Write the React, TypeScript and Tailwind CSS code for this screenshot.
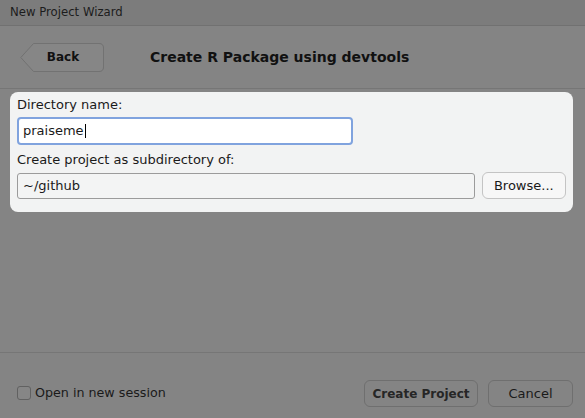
import React from "react";

export default function App() {
  const font = { fontFamily: '"DejaVu Sans", "Liberation Sans", sans-serif' };
  return (
    <div
      className="w-[585px] h-[418px] flex flex-col bg-[#848484] text-[#1a1a1a] overflow-hidden"
      style={font}
    >
      {/* title bar */}
      <div className="h-[26px] shrink-0 bg-[#7c7c7c] border-b border-[#717171] flex items-center pl-[10px] text-[11.7px] text-[#1c1c1c]">
        New Project Wizard
      </div>
      {/* header */}
      <div className="h-[63px] shrink-0 border-b border-[#767676] flex items-center pl-[20px]">
        <div className="relative w-[84px] h-[29px] flex items-center justify-center pl-[10px]">
          <svg className="absolute inset-0" width="84" height="29" viewBox="0 0 84 29">
            <path
              d="M13.5 0.5 H79 Q83.5 0.5 83.5 5 V24 Q83.5 28.5 79 28.5 H13.5 L0.8 14.5 Z"
              fill="#868686"
              stroke="#727272"
              strokeWidth="1"
            />
          </svg>
          <span className="relative text-[12px] font-bold text-[#111] mr-[8px]">Back</span>
        </div>
        <div className="ml-[46px] text-[14px] font-bold text-[#111]">
          Create R Package using devtools
        </div>
      </div>
      {/* panel */}
      <div className="mx-[10px] mt-[3px] w-[563px] rounded-[8px] bg-[#f2f3f3] px-[7px] pt-[5px] pb-[13px] text-[13px] text-[#1a1a1a]">
        <div className="h-[16px] leading-[16px]">Directory name:</div>
        <div className="mt-[4px] w-[336px] h-[28px] rounded-[4px] border-2 border-[#80a3de] bg-white flex items-center pl-[4px]">
          <span>praiseme</span>
          <span className="w-px h-[14px] bg-black ml-px" />
        </div>
        <div className="mt-[7px] h-[16px] leading-[16px]">Create project as subdirectory of:</div>
        <div className="mt-[4px] flex items-center gap-[7px]">
          <div className="w-[461px] h-[26px] rounded-[3px] border border-[#9b9b9b] bg-[#f3f4f4] flex items-center pl-[5px]">
            ~/github
          </div>
          <div className="w-[85px] h-[27px] rounded-[6px] border border-[#c4c4c4] bg-[#f7f7f7] flex items-center justify-center">
            Browse...
          </div>
        </div>
      </div>
      <div className="flex-1" />
      {/* footer */}
      <div className="h-[66px] shrink-0 border-t border-[#767676] flex items-start pl-[17px] pr-[12px]">
        <div className="mt-[30px] flex items-center">
          <div className="w-[14px] h-[14px] rounded-[3px] border border-[#616161] bg-[#868686]" />
          <span className="ml-[4px] text-[12.7px] text-[#1a1a1a]">Open in new session</span>
        </div>
        <div className="flex-1" />
        <div className="mt-[27px] w-[114px] h-[27px] rounded-[6px] border border-[#6f6f6f] flex items-center justify-center text-[12px] font-bold text-[#262626]">
          Create Project
        </div>
        <div className="mt-[27px] ml-[10px] w-[85px] h-[27px] rounded-[6px] border border-[#6f6f6f] flex items-center justify-center text-[13px] text-[#1a1a1a]">
          Cancel
        </div>
      </div>
    </div>
  );
}
